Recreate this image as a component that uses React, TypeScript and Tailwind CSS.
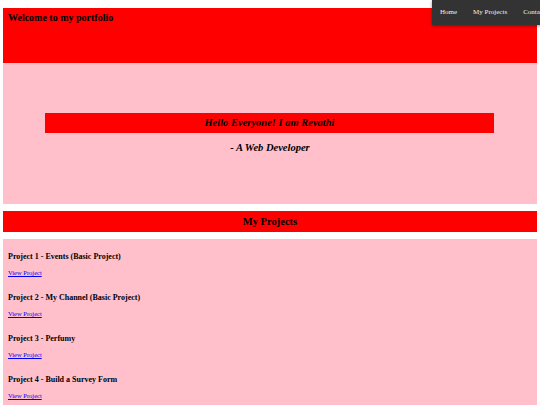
import React from "react";

const projects = [
  "Project 1 - Events (Basic Project)",
  "Project 2 - My Channel (Basic Project)",
  "Project 3 - Perfumy",
  "Project 4 - Build a Survey Form",
  "Project 5 - Tribute Page",
];

const App = () => {
  return (
    <div className="relative h-screen overflow-hidden bg-white px-[3px] pt-[8px] text-black font-['Liberation_Serif',serif]">
      {/* top nav */}
      <div className="absolute top-0 left-[432px] flex h-[25px] items-center whitespace-nowrap bg-[#333] shadow-[0_1px_3px_rgba(0,0,0,0.4)] text-[7px] text-[#f2f2f2]">
        <a className="px-[8px]">Home</a>
        <a className="px-[8px]">My Projects</a>
        <a className="px-[8px]">Contact</a>
      </div>

      <div className="h-[55px] bg-[#ff0000] px-[5px] pt-[4px]">
        <h3 className="text-[10px] font-bold leading-[12px]">Welcome to my portfolio</h3>
      </div>

      <div className="h-[141px] bg-[#ffc0cb] pt-[50px]">
        <div className="ml-[42px] mr-[43px] flex h-[20px] items-center justify-center bg-[#ff0000]">
          <h3 className="text-[10.5px] font-bold italic leading-[12px]">Hello Everyone! I am Revathi</h3>
        </div>
        <h3 className="mt-[9px] text-center text-[10.5px] font-bold italic leading-[12px]">- A Web Developer</h3>
      </div>

      <div className="mt-[7px] flex h-[21px] items-center justify-center bg-[#ff0000]">
        <h3 className="text-[10.5px] font-bold leading-[12px]">My Projects</h3>
      </div>

      <div className="mt-[7px] bg-[#ffc0cb] px-[5px] pt-[12px] pb-[10px]">
        {projects.map((p) => (
          <div key={p} className="mb-[15px]">
            <h4 className="mb-[5px] text-[8px] font-bold leading-[12px]">{p}</h4>
            <a href="#" className="block text-[6.5px] leading-[9px] text-[#0000ee] underline">
              View Project
            </a>
          </div>
        ))}
      </div>
    </div>
  );
};

export default App;
